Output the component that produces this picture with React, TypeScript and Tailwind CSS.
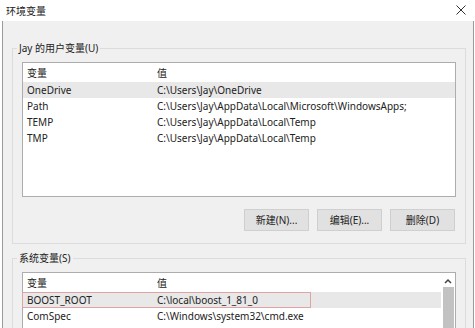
import React from "react";

const font = { fontFamily: '"Noto Sans", "Noto Sans CJK SC", sans-serif' };

function Row({ name, value, selected, boxed }: { name: string; value: string; selected?: boolean; boxed?: boolean }) {
  return (
    <div className={`h-[16px] flex items-center ${selected ? "bg-[#e8e8e8]" : ""}`}>
      <div className={`flex items-center h-[16px] ${boxed ? "border border-[#e0a4a4] w-[289px] -ml-px" : ""}`}>
        <div className="w-[134px] shrink-0 pl-[4px] whitespace-nowrap">{name}</div>
        <div className="whitespace-nowrap">{value}</div>
      </div>
    </div>
  );
}

function Header() {
  return (
    <div className="h-[19px] flex items-center">
      <div className="w-[134px] pl-[4px]">变量</div>
      <div>值</div>
    </div>
  );
}

export default function App() {
  return (
    <div className="w-[475px] h-[328px] overflow-hidden bg-white flex flex-col text-[10px] leading-none text-[#222]" style={font}>
      <div className="h-[21px] shrink-0 flex items-center justify-between pl-[6px] pr-[9px]">
        <span>环境变量</span>
        <svg width="10" height="10" viewBox="0 0 10 10" className="mb-[1px]">
          <path d="M0.5 0.5 L9.5 9.5 M9.5 0.5 L0.5 9.5" stroke="#333" strokeWidth="1" />
        </svg>
      </div>
      <div className="flex-1 ml-[2px] mr-px border-l border-r border-[#9a9a9a] bg-[#f0f0f0] pl-[9px] pr-[7px] pt-[27px]">
        {/* User vars group */}
        <div className="relative border border-[#dcdcdc] h-[196px] pt-[13px] px-[9px]">
          <div className="absolute -top-[6px] left-[4px] px-[2px] bg-[#f0f0f0]">Jay 的用户变量(U)</div>
          <div className="bg-white border border-[#adadad] h-[135px]">
            <Header />
            <Row name="OneDrive" value="C:\Users\Jay\OneDrive" selected />
            <Row name="Path" value="C:\Users\Jay\AppData\Local\Microsoft\WindowsApps;" />
            <Row name="TEMP" value="C:\Users\Jay\AppData\Local\Temp" />
            <Row name="TMP" value="C:\Users\Jay\AppData\Local\Temp" />
          </div>
          <div className="flex justify-end gap-[8px] mt-[12px] pr-px">
            <button className="w-[65px] h-[22px] bg-[#e1e1e1] border border-[#cfcfcf]">新建(N)...</button>
            <button className="w-[65px] h-[22px] bg-[#e1e1e1] border border-[#cfcfcf]">编辑(E)...</button>
            <button className="w-[65px] h-[22px] bg-[#e1e1e1] border border-[#cfcfcf]">删除(D)</button>
          </div>
        </div>
        {/* System vars group */}
        <div className="relative border border-[#dcdcdc] h-[120px] mt-[14px] pt-[13px] px-[9px]">
          <div className="absolute -top-[6px] left-[4px] px-[2px] bg-[#f0f0f0]">系统变量(S)</div>
          <div className="bg-white border border-[#adadad] h-[100px] flex">
            <div className="flex-1">
              <Header />
              <Row name="BOOST_ROOT" value="C:\local\boost_1_81_0" selected boxed />
              <Row name="ComSpec" value="C:\Windows\system32\cmd.exe" />
            </div>
            <div className="w-[14px] flex flex-col items-center">
              <svg width="8" height="14" viewBox="0 0 8 14" className="shrink-0">
                <path d="M1 10 L4 7 L7 10" stroke="#444" strokeWidth="1.5" fill="none" />
              </svg>
              <div className="w-[11px] flex-1 bg-[#c2c2c2]" />
            </div>
          </div>
        </div>
      </div>
    </div>
  );
}
